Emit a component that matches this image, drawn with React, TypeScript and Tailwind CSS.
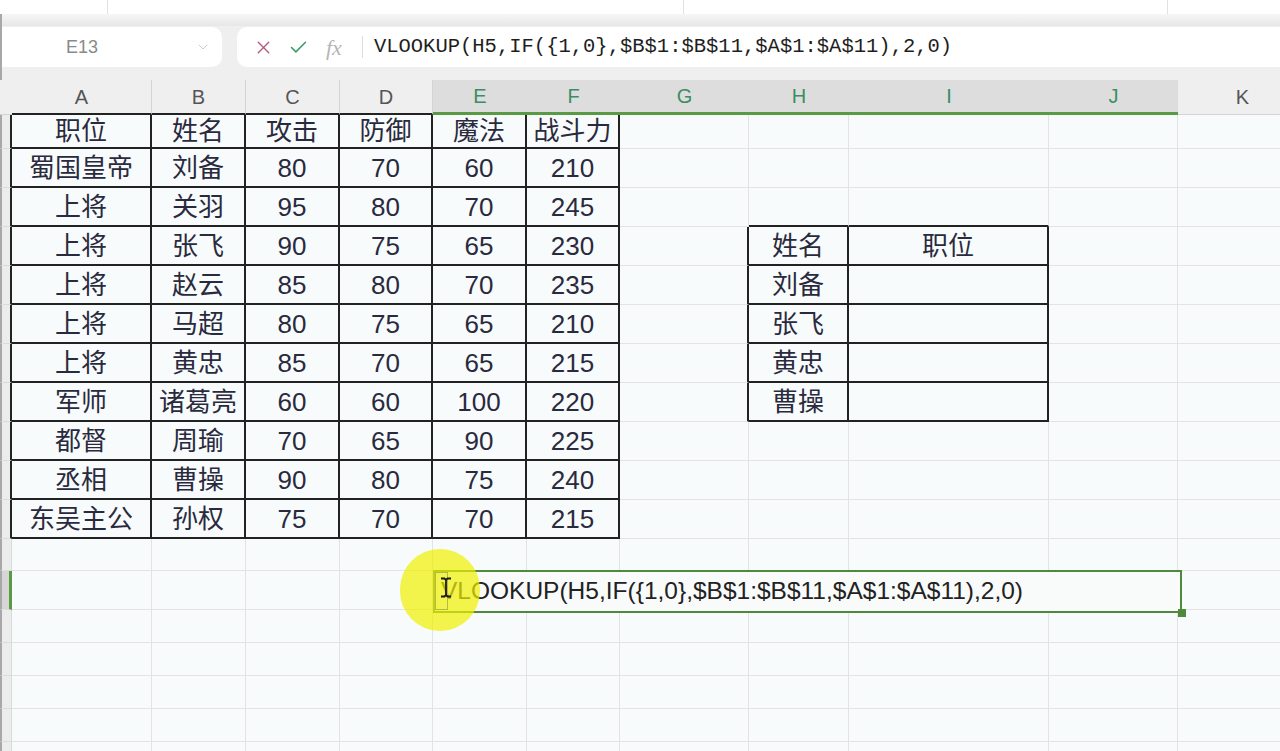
import React from 'react';
import { X, Check, ChevronDown } from 'lucide-react';

const COLS = ['', 'A', 'B', 'C', 'D', 'E', 'F', 'G', 'H', 'I', 'J', 'K'];

const DATA: string[][] = [
  ['职位', '姓名', '攻击', '防御', '魔法', '战斗力'],
  ['蜀国皇帝', '刘备', '80', '70', '60', '210'],
  ['上将', '关羽', '95', '80', '70', '245'],
  ['上将', '张飞', '90', '75', '65', '230'],
  ['上将', '赵云', '85', '80', '70', '235'],
  ['上将', '马超', '80', '75', '65', '210'],
  ['上将', '黄忠', '85', '70', '65', '215'],
  ['军师', '诸葛亮', '60', '60', '100', '220'],
  ['都督', '周瑜', '70', '65', '90', '225'],
  ['丞相', '曹操', '90', '80', '75', '240'],
  ['东吴主公', '孙权', '75', '70', '70', '215'],
];

const LOOKUP: Record<number, string[]> = {
  4: ['姓名', '职位'],
  5: ['刘备', ''],
  6: ['张飞', ''],
  7: ['黄忠', ''],
  8: ['曹操', ''],
};

// row 1 .. 18
const ROW_H = [
  'h-[34px]',
  'h-[39px]', 'h-[39px]', 'h-[39px]', 'h-[39px]', 'h-[39px]',
  'h-[39px]', 'h-[39px]', 'h-[39px]', 'h-[39px]', 'h-[39px]',
  'h-[32px]', 'h-[39px]',
  'h-[33px]', 'h-[33px]', 'h-[33px]', 'h-[33px]', 'h-[33px]',
];

const GRID = 'grid w-[1307px] grid-cols-[12px_140px_94px_94px_93px_94px_93px_129px_100px_200px_129px_129px]';

const inTable = (r: number, c: number) =>
  (r >= 1 && r <= 11 && c >= 1 && c <= 6) || (r >= 4 && r <= 8 && (c === 8 || c === 9));

const cellText = (r: number, c: number) => {
  if (r >= 1 && r <= 11 && c >= 1 && c <= 6) return DATA[r - 1][c - 1];
  if (LOOKUP[r] && c === 8) return LOOKUP[r][0];
  if (LOOKUP[r] && c === 9) return LOOKUP[r][1];
  return '';
};

const HeaderRow: React.FC = () => (
  <div className={`${GRID} h-[35px]`}>
    {COLS.map((col, c) => {
      const hot = c >= 5 && c <= 10;
      let cls = '';
      if (c === 0) cls = 'bg-[#efefef] border-b border-b-[#d4d4d4]';
      else if (hot) cls = 'bg-[#dddddd] text-[#3b8d62] border-b-[3px] border-b-[#5b9a45]';
      else if (c <= 4) cls = 'bg-[#efefef] text-[#555555] border-r border-r-[#d4d4d4] border-b-2 border-b-[#222222]';
      else cls = 'bg-[#efefef] text-[#555555] border-b border-b-[#d4d4d4]';
      return (
        <div key={c} className={`flex items-center justify-center text-[20px] ${cls}`}>
          {col}
        </div>
      );
    })}
  </div>
);

const SheetRow: React.FC<{ r: number }> = ({ r }) => (
  <div className={`${GRID} ${ROW_H[r - 1]}`}>
    {COLS.map((_, c) => {
      if (c === 0) {
        const active = r === 13;
        const right = inTable(r, 1)
          ? 'border-r-2 border-r-[#222222]'
          : active
            ? 'border-r-[3px] border-r-[#5b9a45]'
            : 'border-r border-r-[#dadada]';
        return (
          <div
            key={c}
            className={`${active ? 'bg-[#d6d6d6]' : 'bg-[#ececec]'} border-b border-b-[#dcdcdc] border-l-2 border-l-[#a8a8a8] ${right}`}
          />
        );
      }
      const right =
        c === 11
          ? ''
          : inTable(r, c) || inTable(r, c + 1)
            ? 'border-r-2 border-r-[#222222]'
            : 'border-r border-r-[#e6e2e2]';
      const bottom =
        inTable(r, c) || inTable(r + 1, c)
          ? 'border-b-2 border-b-[#222222]'
          : 'border-b border-b-[#e6e2e2]';
      return (
        <div
          key={c}
          className={`flex items-center justify-center whitespace-nowrap overflow-hidden ${right} ${bottom}`}
        >
          {cellText(r, c)}
        </div>
      );
    })}
  </div>
);

export default function App() {
  const rows = Array.from({ length: 18 }, (_, i) => i + 1);

  return (
    <div
      className="relative w-[1280px] h-[751px] overflow-hidden bg-[#f8fbfb] text-[#2a2a3e]"
      style={{ fontFamily: '"Liberation Sans", "Noto Sans CJK SC", sans-serif' }}
    >
      {/* window strip */}
      <div className="flex h-[14px] bg-white">
        <div className="w-[108px] border-r border-r-[#e2e2e2]" />
        <div className="w-[576px] border-r border-r-[#e2e2e2]" />
        <div className="w-[484px] border-r border-r-[#e2e2e2]" />
      </div>
      <div className="h-[12px] bg-gradient-to-b from-[#f6f6f6] to-[#e7e7e7] border-l-2 border-l-[#a8a8a8]" />

      {/* formula bar */}
      <div className="flex h-[54px] gap-[15px] bg-[#efefef] pt-px border-l-2 border-l-[#a8a8a8]">
        <div className="flex h-[40px] w-[220px] items-center rounded-r-[10px] bg-white">
          <span className="ml-[64px] text-[18px] text-[#8a8a8a]">E13</span>
          <ChevronDown className="ml-auto mr-[11px] text-[#c9c9c9]" size={16} strokeWidth={1.5} />
        </div>
        <div className="flex h-[40px] flex-1 items-center rounded-l-[10px] bg-white">
          <X className="ml-[16px] text-[#b4587f]" size={21} strokeWidth={1.6} />
          <Check className="ml-[14px] text-[#3a9d6b]" size={21} strokeWidth={1.8} />
          <span
            className="ml-[17px] text-[22px] italic text-[#b5b5b5]"
            style={{ fontFamily: '"Liberation Serif", serif' }}
          >
            fx
          </span>
          <div className="ml-[20px] h-[22px] w-px bg-[#dddddd]" />
          <span
            className="ml-[11px] text-[20.5px] text-[#1e1e1e]"
            style={{ fontFamily: '"Liberation Mono", monospace' }}
          >
            VLOOKUP(H5,IF({'{'}1,0{'}'},$B$1:$B$11,$A$1:$A$11),2,0)
          </span>
        </div>
      </div>

      {/* sheet */}
      <div className="text-[26px] leading-none">
        <HeaderRow />
        {rows.map((r) => (
          <SheetRow key={r} r={r} />
        ))}
      </div>

      {/* in-cell editor over E13 */}
      <div className="absolute left-[433px] top-[570px] flex h-[43px] w-[749px] items-center border-2 border-[#4f8a3c] bg-[#f9fbfb] pl-[6px] text-[24.5px] leading-none text-[#222222]">
        VLOOKUP(H5,IF({'{'}1,0{'}'},$B$1:$B$11,$A$1:$A$11),2,0)
        <div className="absolute -bottom-[6px] -right-[6px] h-[8px] w-[8px] bg-[#4f8a3c]" />
      </div>

      {/* pointer highlight */}
      <div className="absolute left-[400px] top-[549px] h-[82px] w-[80px] rounded-full bg-[#f0f000]/70" />
      <div className="absolute left-[435px] top-[572px] h-[38px] w-[13px] border border-[#b7b84a]" />
      <svg className="absolute left-[440px] top-[577px]" width="12" height="21" viewBox="0 0 12 21">
        <path d="M1 1.5h3.5L6 3l1.5-1.5H11M6 3v15M1 19.5h3.5L6 18l1.5 1.5H11" fill="none" stroke="#1a1a1a" strokeWidth="1.8" />
      </svg>
    </div>
  );
}
